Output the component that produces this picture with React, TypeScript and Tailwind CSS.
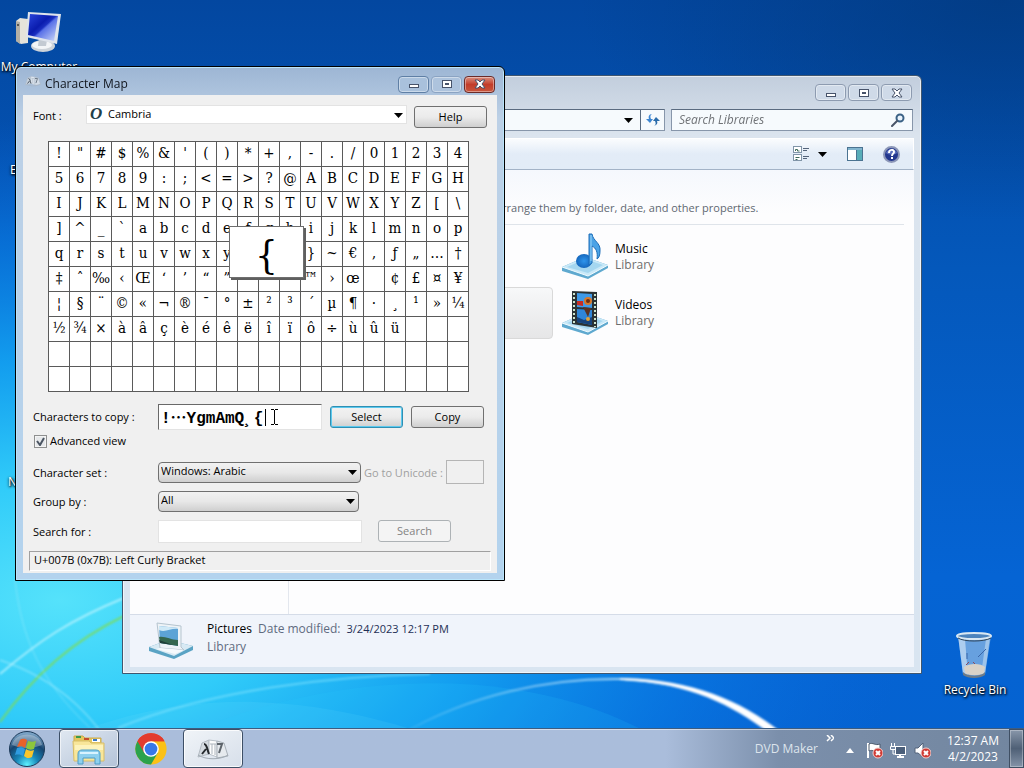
import { useState, type ReactNode } from "react";
import clsx from "clsx";

const UI_FONT = "font-['Open_Sans','Noto_Sans',sans-serif]";

const CHAR_ROWS = [
  "!\"#$%&'()*+,-./01234",
  "56789:;<=>?@ABCDEFGH",
  "IJKLMNOPQRSTUVWXYZ[\\",
  "]^_`abcdefghijklmnop",
  "qrstuvwxyz{|}~€‚ƒ„…†",
  "‡ˆ‰‹Œ‘’“”•–—™›œ\u00a0¢£¤¥",
  "¦§¨©«¬®¯°±²³´µ¶·¸¹»¼",
  "½¾×àâçèéêëîïô÷ùûü",
  "",
  "",
];

const COLUMNS = 20;

// the selected character is drawn in the magnifier, not in its cell
const SELECTED = "{";

const Wallpaper = () => (
  <svg
    className="absolute inset-0 h-full w-full"
    viewBox="0 0 1024 768"
    preserveAspectRatio="none"
    aria-hidden="true"
  >
    <defs>
      <linearGradient id="sky" x1="0" y1="0" x2="0" y2="1">
        <stop offset="0" stopColor="#0347a0" />
        <stop offset="0.35" stopColor="#0458bb" />
        <stop offset="0.75" stopColor="#0564d4" />
        <stop offset="1" stopColor="#0562d0" />
      </linearGradient>
      <radialGradient id="glow" gradientUnits="userSpaceOnUse" cx="0" cy="0" r="1" gradientTransform="translate(60 600) scale(850 480)">
        <stop offset="0" stopColor="#55e2fb" />
        <stop offset="0.25" stopColor="#30cbf9" />
        <stop offset="0.5" stopColor="#14a4f3" stopOpacity="0.9" />
        <stop offset="0.75" stopColor="#0a7fe8" stopOpacity="0.6" />
        <stop offset="1" stopColor="#0a6ade" stopOpacity="0" />
      </radialGradient>
      <radialGradient id="topDark" gradientUnits="userSpaceOnUse" cx="0" cy="0" r="1" gradientTransform="translate(1000 0) scale(420 220)">
        <stop offset="0" stopColor="#023a80" stopOpacity="0.8" />
        <stop offset="1" stopColor="#023a80" stopOpacity="0" />
      </radialGradient>
      <linearGradient id="arc" x1="0" y1="0" x2="1" y2="0">
        <stop offset="0" stopColor="#fff" stopOpacity="0.05" />
        <stop offset="0.55" stopColor="#d9f6ff" stopOpacity="0.7" />
        <stop offset="1" stopColor="#fff" />
      </linearGradient>
      <filter id="soft" x="-20%" y="-20%" width="140%" height="140%">
        <feGaussianBlur stdDeviation="1" />
      </filter>
    </defs>
    <rect width="1024" height="768" fill="url(#sky)" />
    <rect width="1024" height="768" fill="url(#topDark)" />
    <rect width="1024" height="768" fill="url(#glow)" />
    <path d="M0 768 C180 670 330 690 520 768 Z" fill="#7be9ff" opacity="0.12" />
    <path d="M120 768 C300 660 560 650 700 768 Z" fill="#2bd0ff" opacity="0.14" />
    <g fill="none" filter="url(#soft)">
      <path d="M0 674 C40 640 70 620 124 598" stroke="#c9f7ff" strokeWidth="2" opacity="0.7" />
      <path d="M0 660 C60 680 100 720 122 768" stroke="#b6f3ff" strokeWidth="1.5" opacity="0.5" />
      <path d="M15 580 C22 640 40 680 90 728" stroke="#a6efff" strokeWidth="1" opacity="0.5" />
      <path d="M0 722 C30 680 70 642 124 616" stroke="#7ddc5a" strokeWidth="2" opacity="0.85" />
      <path d="M118 728 C210 690 330 676 430 674" stroke="#8ce8ff" strokeWidth="2" opacity="0.55" />
      <path d="M400 735 C470 694 550 678 620 679 C690 682 740 704 772 730" stroke="url(#arc)" strokeWidth="2" />
      <path d="M620 678 C690 679 740 700 781 732 L768 732 C732 705 688 682 620 680 Z" fill="#fff" />
    </g>
  </svg>
);

const ComputerIcon = () => (
  <svg width="48" height="48" viewBox="0 0 48 48" aria-hidden="true">
    <defs>
      <linearGradient id="pcScreen" x1="0" y1="0" x2="1" y2="1">
        <stop offset="0" stopColor="#2a45dc" />
        <stop offset="0.4" stopColor="#0a1cae" />
        <stop offset="0.5" stopColor="#1a2fc0" />
        <stop offset="0.55" stopColor="#5a72e8" />
        <stop offset="1" stopColor="#d3def9" />
      </linearGradient>
    </defs>
    <path d="M1 13l4-3 8 1v24l-7 1-5-3z" fill="#e6e3da" />
    <path d="M1 13l4 1v22l-4-3z" fill="#b3afa5" />
    <circle cx="3" cy="17" r="1" fill="#3a3a3a" />
    <ellipse cx="28" cy="38" rx="12" ry="6" fill="#cdd3d9" />
    <ellipse cx="27" cy="37" rx="10" ry="4" fill="#f3f5f7" />
    <path d="M24 30l8 2-1 6h-8z" fill="#c3cad2" />
    <path d="M13 4l33 2-4 30-31-7z" fill="#dfe4ec" />
    <path d="M15 6l28 2-4 25-26-6z" fill="url(#pcScreen)" />
  </svg>
);

const RecycleIcon = () => (
  <svg width="40" height="48" viewBox="0 0 40 48" aria-hidden="true">
    <path d="M3 5l5 38c4 4 18 4 22 0l6-38z" fill="#a9c9e8" opacity="0.6" />
    <path d="M3 5l5 38c1 1 3 2 5 2L10 8z" fill="#e8f3fb" opacity="0.55" />
    <path d="M26 44l5-36 4-2-5 37z" fill="#e2f0fb" opacity="0.45" />
    <path d="M9 36c5-4 17-4 21 0l-1 6c-4 3-15 3-19 0z" fill="#d9d2c8" />
    <path d="M8 41c5 5 18 5 22 0v3c-5 4-17 4-22 0z" fill="#6d7b88" />
    <path d="M12 22v6M23 26l8-8" fill="none" stroke="#3a66a8" strokeWidth="1" />
    <path d="M11 34l3-3M18 31l2 2" fill="none" stroke="#8c4a5a" strokeWidth="1" />
    <ellipse cx="19" cy="5" rx="17" ry="3" fill="#4d84bd" stroke="#d9e8f3" strokeWidth="2" />
    <path d="M3 7c6 4 26 4 33 0" fill="none" stroke="#2f4357" strokeWidth="1" />
  </svg>
);

const LibraryBase = () => (
  <>
    <path d="M1 34L24 24l23 8v3L27 46 1 38z" fill="#5fa9cf" />
    <path d="M1 34L24 24l23 8-20 11z" fill="#c9e9f8" />
    <path d="M6 34l18-8 18 6-15 8z" fill="#a5d7f0" />
    <path d="M1 34l26 9 20-11" fill="none" stroke="#f2fbff" strokeWidth="1" />
  </>
);

const MusicIcon = () => (
  <svg width="48" height="48" viewBox="0 0 48 48" aria-hidden="true">
    <defs>
      <radialGradient id="noteBall">
        <stop offset="0" stopColor="#2e95ec" />
        <stop offset="1" stopColor="#1567bd" />
      </radialGradient>
    </defs>
    <LibraryBase />
    <ellipse cx="23" cy="28" rx="8" ry="7" fill="url(#noteBall)" />
    <path d="M28 1h3c1 7 9 9 8 17 0 4-1 7-3 8 1-7-1-11-5-13v17l-3 2z" fill="#4ba3e6" stroke="#1c6db8" strokeWidth="1" />
    <path d="M30 2v26" stroke="#9bd5fa" strokeWidth="1" />
  </svg>
);

const VideosIcon = () => (
  <svg width="48" height="48" viewBox="0 0 48 48" aria-hidden="true">
    <LibraryBase />
    <path d="M11 2l25 1v36l-25-4z" fill="#2b3335" />
    <path d="M16 4l15 1v14l-15-1z" fill="#3f9ae8" />
    <path d="M16 20l15 1v15l-15-3z" fill="#2f86d8" />
    <path d="M16 12h6v5l-6-1z" fill="#c72c22" />
    <circle cx="27" cy="12" r="4" fill="#d9792b" />
    <circle cx="27" cy="12" r="2" fill="#6a2f15" />
    <path d="M22 18l8 1-3 9z" fill="#5a3322" />
    <path d="M16 28l7 3 8-3v8l-15-3z" fill="#17447c" />
    <circle cx="27" cy="30" r="2" fill="#e0a33a" />
    <path d="M13 4v31M34 5v33" stroke="#cfe6cf" strokeWidth="2" strokeDasharray="2 2" />
  </svg>
);

const PicturesIcon = () => (
  <svg width="48" height="42" viewBox="0 0 48 42" aria-hidden="true">
    <path d="M2 27L21 20l25 6v4L27 39 2 31z" fill="#5aa3c4" />
    <path d="M2 27L21 20l25 6-19 10z" fill="#d8eaf4" />
    <path d="M10 3l24 3v21l3 3-24-2z" fill="#eef3f7" stroke="#b5c4cf" strokeWidth="1" />
    <path d="M12 6l19 2v18l-18-3z" fill="#5da3d6" />
    <path d="M12 10c6 3 12-2 19-1V8L12 6z" fill="#cfe9f7" />
    <path d="M12 17c6-1 12 3 19 3v6l-18-3z" fill="#35674f" />
    <path d="M12 20l14 5-13-2z" fill="#1f3f38" />
    <path d="M13 28l24 2-9 4-19-5z" fill="#f5f9fc" />
  </svg>
);

const CharMapIcon = ({ size }: { size: number }) => (
  <svg width={size} height={size} viewBox="0 0 32 32" aria-hidden="true">
    <path d="M5 10l7-3v14l-11 3z" fill="#d5dbe1" stroke="#b2bac2" strokeWidth="1" />
    <path d="M12 7l8 1v16l-8-3z" fill="#fdfdfd" stroke="#b8c0c8" strokeWidth="1" />
    <path d="M20 8l7 2 4 13-11 2z" fill="#e6eaee" stroke="#a8b0b8" strokeWidth="1" />
    <path d="M1 22c8 5 22 5 30 0" fill="none" stroke="#a2abb4" strokeWidth="1" />
    <path d="M7 11c3 0 3 5 5 10M9 16l-4 5" fill="none" stroke="#25292d" strokeWidth="2" />
    <path d="M15 11v10M18 11v11M13 11h6" fill="none" stroke="#adb5bd" strokeWidth="1" />
    <path d="M20 11h5l-3 9" fill="none" stroke="#5d646b" strokeWidth="2" />
  </svg>
);

const StartOrb = () => (
  <svg width="38" height="38" viewBox="0 0 38 38" aria-hidden="true">
    <defs>
      <radialGradient id="orb" cx="0.5" cy="0.95" r="0.9">
        <stop offset="0" stopColor="#5df2ff" />
        <stop offset="0.35" stopColor="#1786b8" />
        <stop offset="0.7" stopColor="#16446f" />
        <stop offset="1" stopColor="#7ba3c6" />
      </radialGradient>
    </defs>
    <circle cx="19" cy="19" r="17.500" fill="url(#orb)" stroke="#1d3a59" strokeWidth="1" />
    <path d="M4 15C7 1 31 1 34 15c-10 4-20 4-30 0z" fill="#fff" opacity="0.3" />
    <path d="M12 10c3-2 5-1 7 0l-2 8c-2-2-5-2-8-1z" fill="#e8622a" />
    <path d="M20 11c3 1 5 1 8 0l-2 8c-3 1-5 1-8-1z" fill="#8cc63c" />
    <path d="M9 18c3-1 5-1 8 1l-2 7c-2-1-4-2-8-1z" fill="#2f9be0" />
    <path d="M18 19c3 2 5 2 8 1l-2 7c-3 2-6 1-8-1z" fill="#f9c62c" />
  </svg>
);

const FolderIcon = () => (
  <svg width="34" height="32" viewBox="0 0 34 32" aria-hidden="true">
    <path d="M2 3h9l2 2h16v6H2z" fill="#e5c75e" stroke="#c9aa4e" strokeWidth="1" />
    <path d="M4 3h5v2H4z" fill="#3c9a4a" />
    <path d="M12 5h5v2h-5z" fill="#c54c2c" />
    <path d="M20 6h8v3h-8z" fill="#fff" />
    <path d="M21 6h4v2h-4z" fill="#3979c8" />
    <path d="M1 8h16l2 2h13v18H2z" fill="#f8e69a" stroke="#d6bc68" strokeWidth="1" />
    <path d="M3 12h28v5H3z" fill="#fdf3bd" />
    <path d="M6 31V21c0-3 2-4 4-4h14c3 0 4 2 4 4v10h-5v-6H11v6z" fill="#8ed0ee" stroke="#4d9cc6" strokeWidth="1" />
    <path d="M8 20h18" stroke="#d9f3ff" strokeWidth="2" />
  </svg>
);

const ChromeIcon = () => (
  <svg width="34" height="34" viewBox="0 0 48 48" aria-hidden="true">
    <circle cx="24" cy="24" r="22" fill="#fbc116" />
    <path d="M24 24L4.900 13A22 22 0 0 1 43.100 13H24z" fill="#e33b2e" />
    <path d="M4.900 13A22 22 0 0 0 24 46l9.500-16.500L24 24z" fill="#2ba24c" />
    <path d="M24 13h19.100A22 22 0 0 0 4.900 13l9.600 16.500z" fill="#e33b2e" />
    <circle cx="24" cy="24" r="11" fill="#fff" />
    <circle cx="24" cy="24" r="9" fill="#3878e8" />
  </svg>
);

const Caret = () => (
  <svg width="9" height="5" viewBox="0 0 9 5" aria-hidden="true">
    <path d="M0 0h9L4.500 5z" fill="#000" />
  </svg>
);

const MinimizeGlyph = () => (
  <svg width="12" height="10" viewBox="0 0 12 10" aria-hidden="true">
    <rect x="1.500" y="5.500" width="9" height="3" fill="#fff" stroke="#47536a" />
  </svg>
);

const MaximizeGlyph = () => (
  <svg width="12" height="10" viewBox="0 0 12 10" aria-hidden="true">
    <rect x="1.500" y="1.500" width="9" height="7" fill="#fff" stroke="#47536a" />
    <rect x="4.500" y="4.500" width="3" height="1" fill="#8fa3bd" stroke="#47536a" />
  </svg>
);

const CloseGlyph = () => (
  <svg width="12" height="10" viewBox="0 0 12 10" aria-hidden="true">
    <path d="M1 1h3l2 2 2-2h3L8 5l3 4H8L6 7 4 9H1l3-4z" fill="#fff" stroke="#47536a" />
  </svg>
);

const CaptionButtons = ({ active = false }: { active?: boolean }) => {
  const base = "flex h-[17px] w-[31px] items-center justify-center rounded-sm border shadow-[inset_0_0_0_1px_rgba(255,255,255,0.4)]";
  return (
    <div className="flex gap-[2px]">
      <button type="button" aria-label="Minimize" className={clsx(base, active ? "border-[#5f7fa5] bg-[#a9c1dc]" : "border-[#8d9bb0] bg-[#cfdae8]")}>
        <MinimizeGlyph />
      </button>
      <button type="button" aria-label="Maximize" className={clsx(base, active ? "border-[#8ba3c2] bg-[#adc3dd]" : "border-[#8d9bb0] bg-[#cfdae8]")}>
        <MaximizeGlyph />
      </button>
      <button
        type="button"
        aria-label="Close"
        className={clsx(base, active ? "border-[#6b2b28] bg-linear-to-b from-[#d98d7e] via-[#c23c2a] to-[#c8553c]" : "border-[#8d9bb0] bg-[#cfdae8]")}
      >
        <CloseGlyph />
      </button>
    </div>
  );
};

const LibraryTile = ({ name, children }: { name: string; children: ReactNode }) => (
  <button type="button" className="flex h-[52px] items-center gap-[6px] rounded-sm pl-1 text-left">
    {children}
    <span className="text-[12px] leading-4 text-[#6d6d6d]">
      <span className="block text-black">{name}</span>
      Library
    </span>
  </button>
);

const ExplorerWindow = () => (
  <section
    aria-label="Libraries"
    className="absolute top-[75px] left-[122px] flex h-[599px] w-[800px] flex-col rounded-t-md border border-[#3f566f] bg-linear-to-b from-[#c2cedd] via-[#dbe4ee] via-10% to-[#d9e5f1] px-[7px] pb-[6px] shadow-[inset_0_0_0_1px_rgba(255,255,255,0.6)]"
  >
    <header className="flex h-[33px] justify-end pt-2 pr-[2px]">
      <CaptionButtons />
    </header>
    <div className="flex h-[22px] gap-[6px] pr-px">
      <div className="flex flex-1 border border-[#8796aa] border-t-[#5a6b80] bg-[#f6fafd]">
        <button type="button" aria-label="Previous locations" className="ml-auto flex w-6 items-center justify-center">
          <Caret />
        </button>
        <button type="button" aria-label="Refresh" className="flex w-6 items-center justify-center border-l border-[#5a6b80]">
          <svg width="16" height="14" viewBox="0 0 16 14" aria-hidden="true">
            <path d="M7 1C4 1 3 4 4 6H1l4 4 3-4H6C5 4 5 2 7 1z" fill="#3d86d2" />
            <path d="M9 13c3-1 4-3 3-5h3l-4-4-3 4h2c1 2 1 4-1 5z" fill="#2a6cab" />
          </svg>
        </button>
      </div>
      <label className="flex w-[242px] items-center border border-[#8796aa] border-t-[#5a6b80] bg-[#f6fafd] px-[7px]">
        <input
          type="search"
          aria-label="Search Libraries"
          placeholder="Search Libraries"
          className="min-w-0 flex-1 bg-transparent text-[12px] italic outline-none placeholder:text-[#6f7276]"
        />
        <svg width="14" height="14" viewBox="0 0 14 14" aria-hidden="true">
          <circle cx="9" cy="5" r="3.500" fill="#e9f3fc" stroke="#3b6185" strokeWidth="2" />
          <path d="M6 8l-5 5" stroke="#4a5568" strokeWidth="2" strokeLinecap="round" />
        </svg>
      </label>
    </div>
    <div className="mt-[7px] flex h-8 items-center justify-end gap-5 border border-white border-b-[#a3b3c7] bg-linear-to-b from-[#fafcfe] via-[#e3ecf7] via-50% to-[#e2ecf7] pr-[13px]">
      <button type="button" aria-label="Change your view" className="flex items-center gap-2">
        <svg width="17" height="16" viewBox="0 0 17 16" aria-hidden="true">
          <rect x="0.500" y="0.500" width="8" height="6" fill="#fff" stroke="#8195a8" />
          <rect x="0.500" y="8.500" width="8" height="6" fill="#fff" stroke="#8195a8" />
          <path d="M2.500 5V3.500h2V5h2M2.500 11.500h4M2.500 13.500h2" stroke="#3f6a5a" fill="none" />
          <path d="M10 2.500h6M10 4.500h4M10 10.500h6M10 12.500h4" stroke="#54647a" />
        </svg>
        <Caret />
      </button>
      <button type="button" aria-label="Preview pane">
        <svg width="16" height="14" viewBox="0 0 16 14" aria-hidden="true">
          <rect x="0.500" y="0.500" width="15" height="13" fill="#fff" stroke="#4b7391" />
          <path d="M1 2h14" stroke="#82b5cf" strokeWidth="2" />
          <path d="M10 3h5v10h-5z" fill="#58adb8" />
          <path d="M9.500 3v10" stroke="#4b7391" />
        </svg>
      </button>
      <button type="button" aria-label="Get help">
        <svg width="17" height="17" viewBox="0 0 17 17" aria-hidden="true">
          <circle cx="8.500" cy="8.500" r="7.500" fill="#23378e" stroke="#8c97b8" strokeWidth="2" />
          <path d="M3 7c1-5 10-5 11 0-3 2-8 2-11 0z" fill="#7f95dc" opacity="0.6" />
          <path d="M6 7c0-4 5-4 5-1 0 2-2 1-2 4M9 11v2" fill="none" stroke="#fff" strokeWidth="2" />
        </svg>
      </button>
    </div>
    <div className="flex flex-1 bg-[#fdfdfe]">
      <nav aria-label="Folders" className="w-[159px] border-r border-[#e3e7ee]" />
      <main className="flex-1 bg-linear-to-b from-[#f5f8fd] to-[#fdfdfe] to-10% pr-[10px] pl-4">
        <p className="mt-[30px] ml-[191px] text-[11px] leading-4 text-[#5f6872]">arrange them by folder, date, and other properties.</p>
        <hr className="mt-2 border-[#dfe4ea]" />
        <div className="mt-[6px] grid grid-cols-[248px_248px] gap-x-1 gap-y-1">
          <div />
          <LibraryTile name="Music">
            <MusicIcon />
          </LibraryTile>
          <button
            type="button"
            aria-label="Pictures"
            className="rounded-sm border border-[#d9d9d9] bg-linear-to-b from-[#f7f8f9] to-[#e6e6e7]"
          />
          <LibraryTile name="Videos">
            <VideosIcon />
          </LibraryTile>
        </div>
      </main>
    </div>
    <footer className="flex h-[53px] items-center gap-3 border-t border-[#d5dce8] bg-[#f0f4fb] pl-[17px] text-[12px] leading-[18px] text-[#5f6b80]">
      <PicturesIcon />
      <div className="pb-[6px]">
        <div className="flex items-baseline gap-[6px]">
          <span className="text-black">Pictures</span>
          <span>Date modified:</span>
          <span className="text-[11px] text-[#1e2f55]">3/24/2023 12:17 PM</span>
        </div>
        Library
      </div>
    </footer>
  </section>
);

interface DropDownProps {
  id: string;
  options: string[];
  className: string;
}

const DropDown = ({ id, options, className }: DropDownProps) => (
  <div className={clsx("relative h-[21px]", className)}>
    <select
      id={id}
      className="h-full w-full appearance-none rounded-sm border border-[#707070] bg-linear-to-b from-[#f2f2f2] via-[#e8e8e8] to-[#cfcfcf] pb-[2px] pl-[2px] text-[11px] text-black outline-none"
    >
      {options.map((o) => (
        <option key={o}>{o}</option>
      ))}
    </select>
    <span className="pointer-events-none absolute top-2 right-1">
      <Caret />
    </span>
  </div>
);

const pushButton =
  "h-[22px] w-[73px] rounded-[3px] border bg-linear-to-b from-[#f2f2f2] via-[#ebebeb] via-50% to-[#cfcfcf] text-center text-[11px] leading-4";

const CharacterMap = () => {
  const [text, setText] = useState("!⋯YgmAmQ¸{");
  const [advanced, setAdvanced] = useState(true);

  return (
    <section
      aria-label="Character Map"
      className="absolute top-[66px] left-[15px] flex w-[490px] flex-col rounded-t-md border border-black bg-linear-to-b from-[#9db6d4] via-[#bcd0e6] via-10% to-[#b3d3ee] px-[7px] pb-[7px] text-[11px] text-black shadow-[inset_0_0_0_1px_#b9e4fa]"
    >
      <header className="flex h-7 items-center pr-[2px] pl-[2px]">
        <span className="opacity-70">
          <CharMapIcon size={16} />
        </span>
        <h1 className="ml-1 flex-1 pt-[6px] text-[12px] leading-4 text-[#10141c]">Character Map</h1>
        <div className="pt-[6px]">
          <CaptionButtons active />
        </div>
      </header>
      <div className="bg-[#f0f0f0] px-[6px] pt-[10px] pb-[2px]">
        <div className="flex items-center pr-1 pl-1">
          <label htmlFor="font" className="w-[53px]">
            Font :
          </label>
          <div className="relative mb-1 h-[19px] w-[321px]">
            <select
              id="font"
              className="h-full w-full appearance-none border border-[#e3e3e3] bg-white pl-[21px] text-[11px] outline-none"
            >
              <option>Cambria</option>
            </select>
            <span className="pointer-events-none absolute top-0 left-1 font-['Liberation_Serif',serif] text-[17px] leading-[18px] font-bold text-[#21404a] italic">
              O
            </span>
            <span className="pointer-events-none absolute top-2 right-1">
              <Caret />
            </span>
          </div>
          <button type="button" className={clsx(pushButton, "ml-auto border-[#707070]")}>
            Help
          </button>
        </div>

        <div className="relative mt-[13px] ml-[19px] w-[421px]">
          <table className="w-full table-fixed border-collapse bg-white font-['DejaVu_Serif_Condensed','DejaVu_Serif',serif] text-[15px] leading-[22px]">
            <tbody>
              {CHAR_ROWS.map((row, r) => (
                <tr key={r} className="h-[25px]">
                  {Array.from({ length: COLUMNS }, (_, c) => (
                    <td key={c} className="border border-[#5a5a5a] p-0 pb-[2px] text-center">
                      <span className="flex justify-center">{row[c] === SELECTED ? "" : (row[c] ?? "")}</span>
                    </td>
                  ))}
                </tr>
              ))}
            </tbody>
          </table>
          <div className="absolute top-[85px] left-[181px] flex h-[52px] w-[75px] items-center justify-center border border-[#6e6e6e] bg-white pt-1 font-['DejaVu_Serif_Condensed','DejaVu_Serif',serif] text-[40px] leading-none shadow-[2px_2px_0_#5f5f5f]">
            {SELECTED}
          </div>
        </div>

        <div className="mt-3 flex items-center pl-1">
          <label htmlFor="copy" className="w-[125px]">
            Characters to copy :
          </label>
          <div className="relative w-[164px]">
            <input
              id="copy"
              value={text}
              onChange={(e) => setText(e.target.value)}
              className="h-[26px] w-full border border-[#e3e3e3] border-t-[#696969] border-l-[#696969] bg-white pb-[2px] pl-[2px] font-['Liberation_Mono','Noto_Sans_CJK_JP',monospace] text-[16px] font-bold outline-none"
              lang="ja"
            />
            <svg className="pointer-events-none absolute top-1 left-[107px]" width="20" height="18" viewBox="0 0 20 18" aria-hidden="true">
              <path d="M0.500 1v17" stroke="#000" />
              <path d="M6 1.500h3M10 1.500h3M6 16.500h3M10 16.500h3M9.500 2v14" stroke="#000" />
            </svg>
          </div>
          <button type="button" className={clsx(pushButton, "ml-2 border-[#2f8fb3] shadow-[inset_0_0_0_1px_#5cc9ee]")}>
            Select
          </button>
          <button type="button" className={clsx(pushButton, "ml-2 border-[#707070]")}>
            Copy
          </button>
        </div>

        <div className="relative mt-[3px] flex h-4 items-center gap-[3px] pl-[5px]">
          <input
            id="advanced"
            type="checkbox"
            checked={advanced}
            onChange={(e) => setAdvanced(e.target.checked)}
            className="h-[13px] w-[13px] appearance-none border border-[#8e8f8f] bg-[#e6e8ea] shadow-[inset_0_0_0_1px_#f4f4f4]"
          />
          {advanced && (
            <svg className="pointer-events-none absolute left-[7px]" width="9" height="9" viewBox="0 0 9 9" aria-hidden="true">
              <path d="M1 4l3 4 4-7" fill="none" stroke="#4b5563" strokeWidth="2" />
            </svg>
          )}
          <label htmlFor="advanced">Advanced view</label>
        </div>

        <div className="mt-[11px] flex h-6 items-center pl-1">
          <label htmlFor="charset" className="w-[125px] pt-[2px]">
            Character set :
          </label>
          <DropDown id="charset" options={["Windows: Arabic"]} className="w-[203px]" />
          <label htmlFor="unicode" className="w-[85px] pt-[2px] pl-[3px] text-[#a0a0a0]">
            Go to Unicode :
          </label>
          <input id="unicode" disabled className="h-6 w-[38px] border border-[#b5b5b5] bg-[#f0f0f0]" />
        </div>

        <div className="mt-[5px] flex h-6 items-center pl-1">
          <label htmlFor="group" className="w-[125px] pt-[2px]">
            Group by :
          </label>
          <DropDown id="group" options={["All"]} className="w-[201px]" />
        </div>

        <div className="mt-[6px] flex h-6 items-center pl-1">
          <label htmlFor="search" className="w-[125px] pt-[2px]">
            Search for :
          </label>
          <input id="search" className="h-[23px] w-[204px] border border-[#e3e3e3] bg-white px-1 outline-none" />
          <button type="button" disabled className="ml-4 h-[22px] w-[73px] rounded-[3px] border border-[#adb2b5] bg-[#f4f4f4] text-[#838383]">
            Search
          </button>
        </div>

        <p role="status" className="mt-2 h-5 border border-t-[#a0a0a0] border-r-white border-b-white border-l-[#a0a0a0] pl-1 leading-4">
          U+007B (0x7B): Left Curly Bracket
        </p>
      </div>
    </section>
  );
};

const DesktopIcon = ({ label, className, children }: { label: string; className: string; children?: ReactNode }) => (
  <button
    type="button"
    className={clsx(
      "absolute flex flex-col items-center gap-[3px] text-[12px] leading-4 text-white [text-shadow:1px_1px_2px_#000,0_1px_3px_#000]",
      className,
    )}
  >
    {children}
    <span>{label}</span>
  </button>
);

const TrayBadge = () => (
  <>
    <circle cx="12" cy="11" r="5" fill="#d03a34" stroke="#f0d0ce" strokeWidth="1" />
    <path d="M10 9l4 4M14 9l-4 4" stroke="#fff" strokeWidth="2" />
  </>
);

const Taskbar = () => (
  <footer className="absolute inset-x-0 bottom-0 flex h-10 items-center border-t border-[#3d5c80] bg-linear-to-r from-[#aabddb] from-65% via-[#7b8fab] via-76% to-[#72869f] shadow-[inset_0_1px_0_rgba(255,255,255,0.5)]">
    <button type="button" aria-label="Start" className="ml-2 w-[38px]">
      <StartOrb />
    </button>
    <button
      type="button"
      aria-label="Windows Explorer"
      className="ml-[13px] flex h-full w-[60px] items-center justify-center rounded-sm border border-[#3d4f66] bg-linear-to-br from-[#e0e8f1] to-[#b4c3d8] shadow-[inset_0_0_0_1px_rgba(255,255,255,0.6)]"
    >
      <FolderIcon />
    </button>
    <button type="button" aria-label="Google Chrome" className="flex h-full w-16 items-center justify-center">
      <ChromeIcon />
    </button>
    <button
      type="button"
      aria-label="Character Map"
      className="flex h-full w-[60px] items-center justify-center rounded-sm border border-[#3d4f66] bg-linear-to-br from-[#f0f4f8] to-[#d7dfea] shadow-[inset_0_0_0_1px_rgba(255,255,255,0.8)]"
    >
      <CharMapIcon size={32} />
    </button>
    <div className="ml-auto flex h-full items-center text-[12px] text-white">
      <span className="text-[#dde4ec]">DVD Maker</span>
      <button type="button" aria-label="Show more" className="mb-5 ml-2">
        <svg width="8" height="7" viewBox="0 0 8 7" aria-hidden="true">
          <path d="M1 0l3 3-3 3M5 0l3 3-3 3" fill="none" stroke="#fff" strokeWidth="1.500" />
        </svg>
      </button>
      <button type="button" aria-label="Show hidden icons" className="ml-3 pt-1">
        <svg width="8" height="5" viewBox="0 0 8 5" aria-hidden="true">
          <path d="M4 0l4 5H0z" fill="#fff" />
        </svg>
      </button>
      <div className="ml-3 flex items-center gap-[7px] pt-1">
        <svg width="17" height="17" viewBox="0 0 17 17" aria-hidden="true">
          <path d="M2 1v15" stroke="#fff" strokeWidth="2" />
          <path d="M3 2c4-2 6 2 11 0v7c-5 2-7-2-11 0z" fill="#fff" stroke="#4c5a6c" strokeWidth="1" />
          <TrayBadge />
        </svg>
        <svg width="17" height="17" viewBox="0 0 17 17" aria-hidden="true">
          <rect x="5.500" y="4.500" width="10" height="8" fill="#4b5f7a" stroke="#fff" strokeWidth="1" />
          <path d="M7 15h7M10 13v2" stroke="#fff" strokeWidth="2" />
          <path d="M1.500 1v3M4.500 1v3M0.500 4.500h5v3h-5zM3 8v4h2" fill="none" stroke="#fff" strokeWidth="1" />
        </svg>
        <svg width="17" height="17" viewBox="0 0 17 17" aria-hidden="true">
          <path d="M1 6h3l5-5v14l-5-4H1z" fill="#fff" stroke="#53627a" strokeWidth="1" />
          <TrayBadge />
        </svg>
      </div>
      <time className="ml-4 text-center leading-4">
        12:37 AM
        <br />
        4/2/2023
      </time>
      <button
        type="button"
        aria-label="Show desktop"
        className="ml-[10px] h-full w-[15px] border border-[#3f4f63] bg-linear-to-b from-[#8997aa] via-[#4f6076] to-[#8493a8] shadow-[inset_0_0_0_1px_rgba(255,255,255,0.3)]"
      />
    </div>
  </footer>
);

export default function App() {
  return (
    <div className={clsx("relative h-screen w-full overflow-hidden bg-[#0458bb]", UI_FONT)}>
      <Wallpaper />
      <DesktopIcon label="My Computer" className="top-[8px] left-0 w-[78px]">
        <ComputerIcon />
      </DesktopIcon>
      <DesktopIcon label="E" className="top-[162px] left-[10px]" />
      <DesktopIcon label="N" className="top-[474px] left-2" />
      <DesktopIcon label="Recycle Bin" className="right-0 bottom-[70px] w-[98px]">
        <RecycleIcon />
      </DesktopIcon>
      <ExplorerWindow />
      <CharacterMap />
      <Taskbar />
    </div>
  );
}
